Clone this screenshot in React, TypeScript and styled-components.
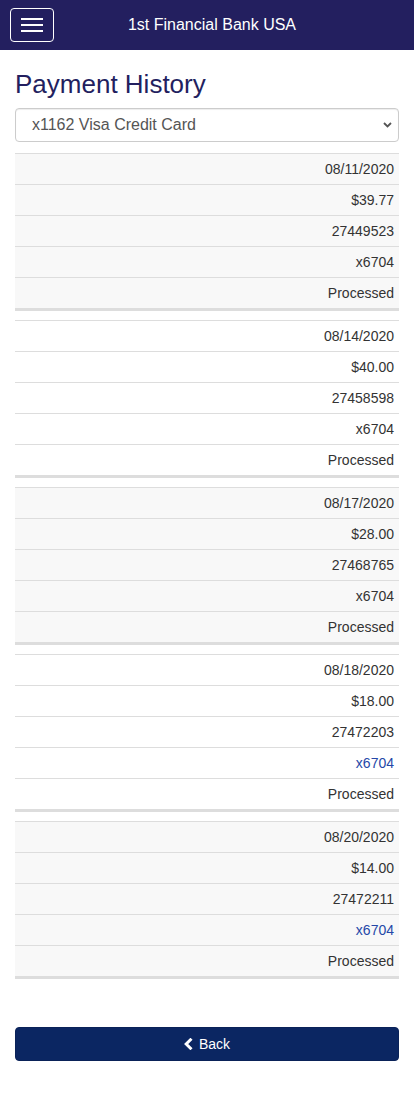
import React from 'react';
import styled, {createGlobalStyle} from 'styled-components';

/**
 * * Global
 */
const GlobalStyle = createGlobalStyle`
  html, body {
    margin: 0;
    padding: 0;
    background: #fff;
    font-family: 'Liberation Sans', Arial, sans-serif;
    font-size: 14px;
    color: #333;
  }
  * { box-sizing: border-box; }
`;

/**
 * * Header
 */
const Header = styled.header`
  height: 50px;
  background: #231f5f;
  display: flex;
  align-items: center;
  padding: 0 10px;
`;

const MenuButton = styled.button`
  width: 44px;
  height: 34px;
  border: 1px solid #fff;
  border-radius: 4px;
  background: transparent;
  display: flex;
  flex-direction: column;
  justify-content: center;
  align-items: center;
  gap: 4px;
  padding: 0;
`;

const MenuBar = styled.span`
  display: block;
  width: 22px;
  height: 2px;
  background: #fff;
`;

const Brand = styled.div`
  flex: 1;
  margin-right: 34px;
  text-align: center;
  color: #fff;
  font-size: 16px;
  line-height: 20px;
`;

/**
 * * Content
 */
const Main = styled.main`
  padding: 0 15px;
`;

const Title = styled.h1`
  margin: 20px 0 10px;
  font-size: 26px;
  font-weight: 400;
  line-height: 28px;
  color: #231f5f;
`;

const SelectBox = styled.div`
  display: flex;
  align-items: center;
  justify-content: space-between;
  height: 34px;
  margin-bottom: 11px;
  padding: 0 6px 0 16px;
  border: 1px solid #ccc;
  border-radius: 4px;
  background: #fff;
  box-shadow: inset 0 1px 1px rgba(0, 0, 0, 0.075);
  font-size: 16px;
  line-height: 20px;
  color: #555;
`;

const PaymentTable = styled.table<{$striped: boolean}>`
  width: 100%;
  border-collapse: collapse;
  margin-bottom: 9px;
  background: ${(p) => (p.$striped ? '#f8f8f8' : '#fff')};
  border-bottom: 3px solid #ddd;
`;

const Cell = styled.td<{$link?: boolean}>`
  border-top: 1px solid #ddd;
  padding: 5px;
  height: 31px;
  line-height: 20px;
  text-align: right;
  color: ${(p) => (p.$link ? '#2548a8' : '#333')};
`;

const BackButton = styled.button`
  display: flex;
  align-items: center;
  justify-content: center;
  gap: 6px;
  width: 100%;
  height: 34px;
  margin-top: 48px;
  background: #0b2662;
  border: 1px solid #0a2258;
  border-radius: 4px;
  color: #fff;
  font-family: 'Liberation Sans', Arial, sans-serif;
  font-size: 14px;
`;

type Payment = {
  date: string;
  amount: string;
  confirmation: string;
  account: string;
  status: string;
  linked: boolean;
};

const payments: Payment[] = [
  {date: '08/11/2020', amount: '$39.77', confirmation: '27449523', account: 'x6704', status: 'Processed', linked: false},
  {date: '08/14/2020', amount: '$40.00', confirmation: '27458598', account: 'x6704', status: 'Processed', linked: false},
  {date: '08/17/2020', amount: '$28.00', confirmation: '27468765', account: 'x6704', status: 'Processed', linked: false},
  {date: '08/18/2020', amount: '$18.00', confirmation: '27472203', account: 'x6704', status: 'Processed', linked: true},
  {date: '08/20/2020', amount: '$14.00', confirmation: '27472211', account: 'x6704', status: 'Processed', linked: true},
];

/**
 * * Payment History Component
 */
const App = () => {
  return (
    <>
      <GlobalStyle />
      <Header>
        <MenuButton aria-label="Menu">
          <MenuBar />
          <MenuBar />
          <MenuBar />
        </MenuButton>
        <Brand>1st Financial Bank USA</Brand>
      </Header>
      <Main>
        <Title>Payment History</Title>
        <SelectBox role="combobox">
          <span>x1162 Visa Credit Card</span>
          <svg width="9" height="6" viewBox="0 0 9 6">
            <path d="M1 1l3.5 3.5L8 1" fill="none" stroke="#555" strokeWidth="1.8" />
          </svg>
        </SelectBox>
        {payments.map((p, i) => (
          <PaymentTable key={p.confirmation} $striped={i % 2 === 0}>
            <tbody>
              <tr><Cell>{p.date}</Cell></tr>
              <tr><Cell>{p.amount}</Cell></tr>
              <tr><Cell>{p.confirmation}</Cell></tr>
              <tr><Cell $link={p.linked}>{p.account}</Cell></tr>
              <tr><Cell>{p.status}</Cell></tr>
            </tbody>
          </PaymentTable>
        ))}
        <BackButton>
          <svg width="9" height="12" viewBox="0 0 9 12">
            <path d="M7.5 0.8L2.2 6l5.3 5.2" fill="none" stroke="#fff" strokeWidth="3" />
          </svg>
          Back
        </BackButton>
      </Main>
    </>
  );
};

export default App;
